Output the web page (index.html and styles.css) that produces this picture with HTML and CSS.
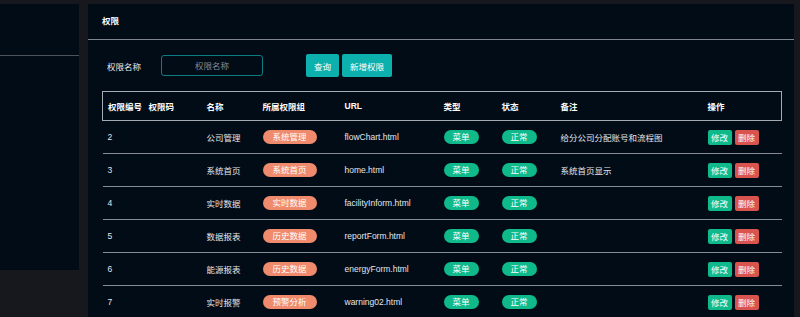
FILE: index.html
```html
<!DOCTYPE html>
<html lang="zh-CN">
<head>
    <meta charset="UTF-8">
    <meta name="viewport" content="width=device-width, initial-scale=1.0">
    <title>权限管理</title>
    <link rel="stylesheet" href="styles.css">
</head>
<body>

    <div class="layout">
        <div class="side-panel">
            <div class="side-head"></div>
        </div>

        <div class="main-panel">
            <div class="panel-title">权限</div>

            <div class="search-bar">
                <label class="search-label">权限名称</label>
                <input class="search-input" type="text" placeholder="权限名称">
                <button class="btn btn-teal btn-query">查询</button>
                <button class="btn btn-teal">新增权限</button>
            </div>

            <table class="perm-table">
                <colgroup>
                    <col style="width:41px">
                    <col style="width:58px">
                    <col style="width:56px">
                    <col style="width:82px">
                    <col style="width:99px">
                    <col style="width:58px">
                    <col style="width:59px">
                    <col style="width:147px">
                    <col style="width:79px">
                </colgroup>
                <thead>
                    <tr>
                        <th>权限编号</th>
                        <th>权限码</th>
                        <th>名称</th>
                        <th>所属权限组</th>
                        <th>URL</th>
                        <th>类型</th>
                        <th>状态</th>
                        <th>备注</th>
                        <th>操作</th>
                    </tr>
                </thead>
                <tbody id="permTable">
                    <!-- Dynamic Data -->
                </tbody>
            </table>
        </div>
    </div>

    <script>
        const perms = [
            { id: 2, name: "公司管理", group: "系统管理", url: "flowChart.html", remark: "给分公司分配账号和流程图" },
            { id: 3, name: "系统首页", group: "系统首页", url: "home.html", remark: "系统首页显示" },
            { id: 4, name: "实时数据", group: "实时数据", url: "facilityInform.html", remark: "" },
            { id: 5, name: "数据报表", group: "历史数据", url: "reportForm.html", remark: "" },
            { id: 6, name: "能源报表", group: "历史数据", url: "energyForm.html", remark: "" },
            { id: 7, name: "实时报警", group: "预警分析", url: "warning02.html", remark: "" },
        ];

        function renderPerms() {
            const table = document.getElementById("permTable");
            table.innerHTML = perms.map(p => `
                <tr>
                    <td>${p.id}</td>
                    <td></td>
                    <td>${p.name}</td>
                    <td><span class="tag tag-group">${p.group}</span></td>
                    <td>${p.url}</td>
                    <td><span class="tag tag-green">菜单</span></td>
                    <td><span class="tag tag-green">正常</span></td>
                    <td>${p.remark}</td>
                    <td class="ops">
                        <button class="op op-edit">修改</button><button class="op op-del">删除</button>
                    </td>
                </tr>
            `).join("");
        }

        renderPerms();
    </script>
</body>
</html>
```

FILE: styles.css
```css
/* Basic Styles */
body {
    background-color: #17181d;
    font-family: "Liberation Sans", "Noto Sans CJK SC", sans-serif;
    font-size: 8.5px;
    color: #e4e6ea;
    margin: 0;
    padding: 0;
    height: 317px;
    overflow: hidden;
}

.layout {
    display: flex;
    gap: 9px;
    padding-top: 4px;
}

/* Left panel */
.side-panel {
    width: 79px;
    height: 266px;
    background-color: #020c17;
}

.side-head {
    height: 51px;
    border-bottom: 1px solid #4e5259;
}

/* Main panel */
.main-panel {
    width: 706px;
    height: 313px;
    background-color: #020c17;
}

.panel-title {
    height: 35px;
    line-height: 35px;
    padding-left: 14px;
    font-weight: bold;
    color: #ffffff;
    border-bottom: 1px solid #80858d;
}

.search-bar {
    display: flex;
    align-items: center;
    padding: 14px 0 0 19px;
    height: 23px;
}

.search-label {
    width: 54px;
    color: #e8eaee;
}

.search-input {
    width: 102px;
    height: 21px;
    box-sizing: border-box;
    background: transparent;
    border: 1px solid #0b7d80;
    border-radius: 3px;
    color: #e4e6ea;
    font-family: inherit;
    font-size: 8.5px;
    text-align: center;
    padding: 0;
    outline: none;
}

.search-input::placeholder {
    color: #858a92;
}

.btn {
    height: 23px;
    border: none;
    border-radius: 2px;
    font-family: inherit;
    font-size: 8.5px;
    color: #ffffff;
    padding: 0 8px;
    margin-right: 3px;
}

.btn-teal { background-color: #0cb0ac; }

.btn-query { margin-left: 43px; }

/* Table */
.perm-table {
    margin: 14px 0 0 14px;
    width: 679px;
    table-layout: fixed;
    border-collapse: collapse;
}

.perm-table thead tr {
    border: 1px solid #a5a9b0;
}

.perm-table th {
    height: 28px;
    padding: 0 0 0 5px;
    text-align: left;
    font-weight: bold;
    color: #ffffff;
}

.perm-table td {
    height: 32px;
    padding: 0 0 0 5px;
    border-bottom: 1px solid #878c94;
    white-space: nowrap;
}

.tag {
    display: inline-block;
    height: 14px;
    line-height: 14px;
    border-radius: 7px;
    color: #ffffff;
    padding: 0 9px;
    vertical-align: middle;
}

.tag-group {
    background-color: #ef8a6d;
    padding: 0 10px;
}

.tag-green { background-color: #10b98a; }

.ops { padding-top: 3px; }

.op {
    height: 15px;
    border: none;
    border-radius: 2px;
    padding: 0 3.5px;
    margin-right: 3px;
    font-family: inherit;
    font-size: 8.5px;
    color: #ffffff;
    vertical-align: middle;
}

.op-edit { background-color: #10b98a; }
.op-del { background-color: #d9534f; }
```
